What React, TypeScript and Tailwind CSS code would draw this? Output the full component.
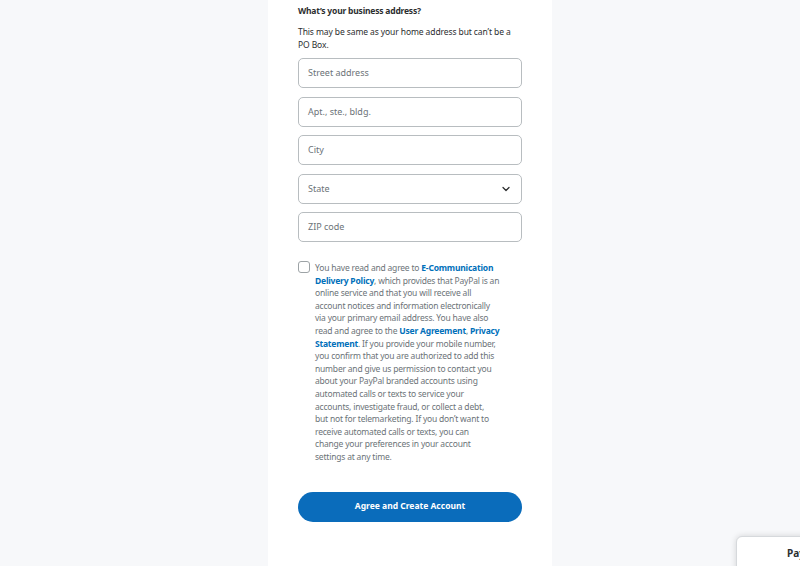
import { ChevronDown } from "lucide-react";

const font = { fontFamily: '"Noto Sans", "Open Sans", sans-serif' };

function Field({ placeholder, select }: { placeholder: string; select?: boolean }) {
  return (
    <div className="relative flex h-[30px] items-center rounded-[5px] border border-[#b8bdc0] bg-white px-[9px]">
      <span className="text-[9px] text-[#6c7378]">{placeholder}</span>
      {select && (
        <ChevronDown className="absolute right-[9px] h-3 w-3 text-[#2c2e2f]" strokeWidth={2.5} />
      )}
    </div>
  );
}

function Link({ children }: { children: React.ReactNode }) {
  return <span className="font-bold text-[#0070ba]">{children}</span>;
}

export default function App() {
  return (
    <div className="relative flex h-[566px] w-[800px] justify-center overflow-hidden bg-[#f7f8fa]" style={font}>
      <div className="ml-[20px] h-full w-[284px] bg-white px-[30px] pt-[4px]">
        <div className="text-[8.5px] font-bold leading-[13px] tracking-[-0.2px] text-[#2c2e2f]">
          What’s your business address?
        </div>
        <p className="mt-[8px] text-[8.5px] leading-[13px] tracking-[-0.1px] text-[#2c2e2f]">
          This may be same as your home address but can’t be a PO Box.
        </p>

        <div className="mt-[7px] flex flex-col gap-[8.5px]">
          <Field placeholder="Street address" />
          <Field placeholder="Apt., ste., bldg." />
          <Field placeholder="City" />
          <Field placeholder="State" select />
          <Field placeholder="ZIP code" />
        </div>

        <div className="mt-[18px] flex gap-[5px]">
          <div className="mt-[1px] h-[12px] w-[12px] shrink-0 rounded-[3px] border border-[#9da3a6]" />
          <p className="mt-[2px] whitespace-nowrap text-[8.5px] leading-[12.6px] tracking-[-0.2px] text-[#6c7378]">
            You have read and agree to <Link>E-Communication</Link>
            <br />
            <Link>Delivery Policy</Link>, which provides that PayPal is an
            <br />
            online service and that you will receive all
            <br />
            account notices and information electronically
            <br />
            via your primary email address. You have also
            <br />
            read and agree to the <Link>User Agreement</Link>, <Link>Privacy</Link>
            <br />
            <Link>Statement</Link>. If you provide your mobile number,
            <br />
            you confirm that you are authorized to add this
            <br />
            number and give us permission to contact you
            <br />
            about your PayPal branded accounts using
            <br />
            automated calls or texts to service your
            <br />
            accounts, investigate fraud, or collect a debt,
            <br />
            but not for telemarketing. If you don’t want to
            <br />
            receive automated calls or texts, you can
            <br />
            change your preferences in your account
            <br />
            settings at any time.
          </p>
        </div>

        <button className="mt-[28px] flex h-[30px] w-full items-center justify-center rounded-full bg-[#0a6cbb] text-[8.5px] font-bold text-white">
          Agree and Create Account
        </button>
      </div>

      <div className="absolute left-[736px] top-[536px] h-[60px] w-[100px] rounded-tl-[6px] border border-[#d6d9dc] bg-white pl-[50px] pt-[2px] shadow-[0_0_6px_rgba(0,0,0,0.15)]">
        <span className="text-[10px] font-bold leading-[28px] text-[#2c2e2f]">PayPal</span>
      </div>
    </div>
  );
}
